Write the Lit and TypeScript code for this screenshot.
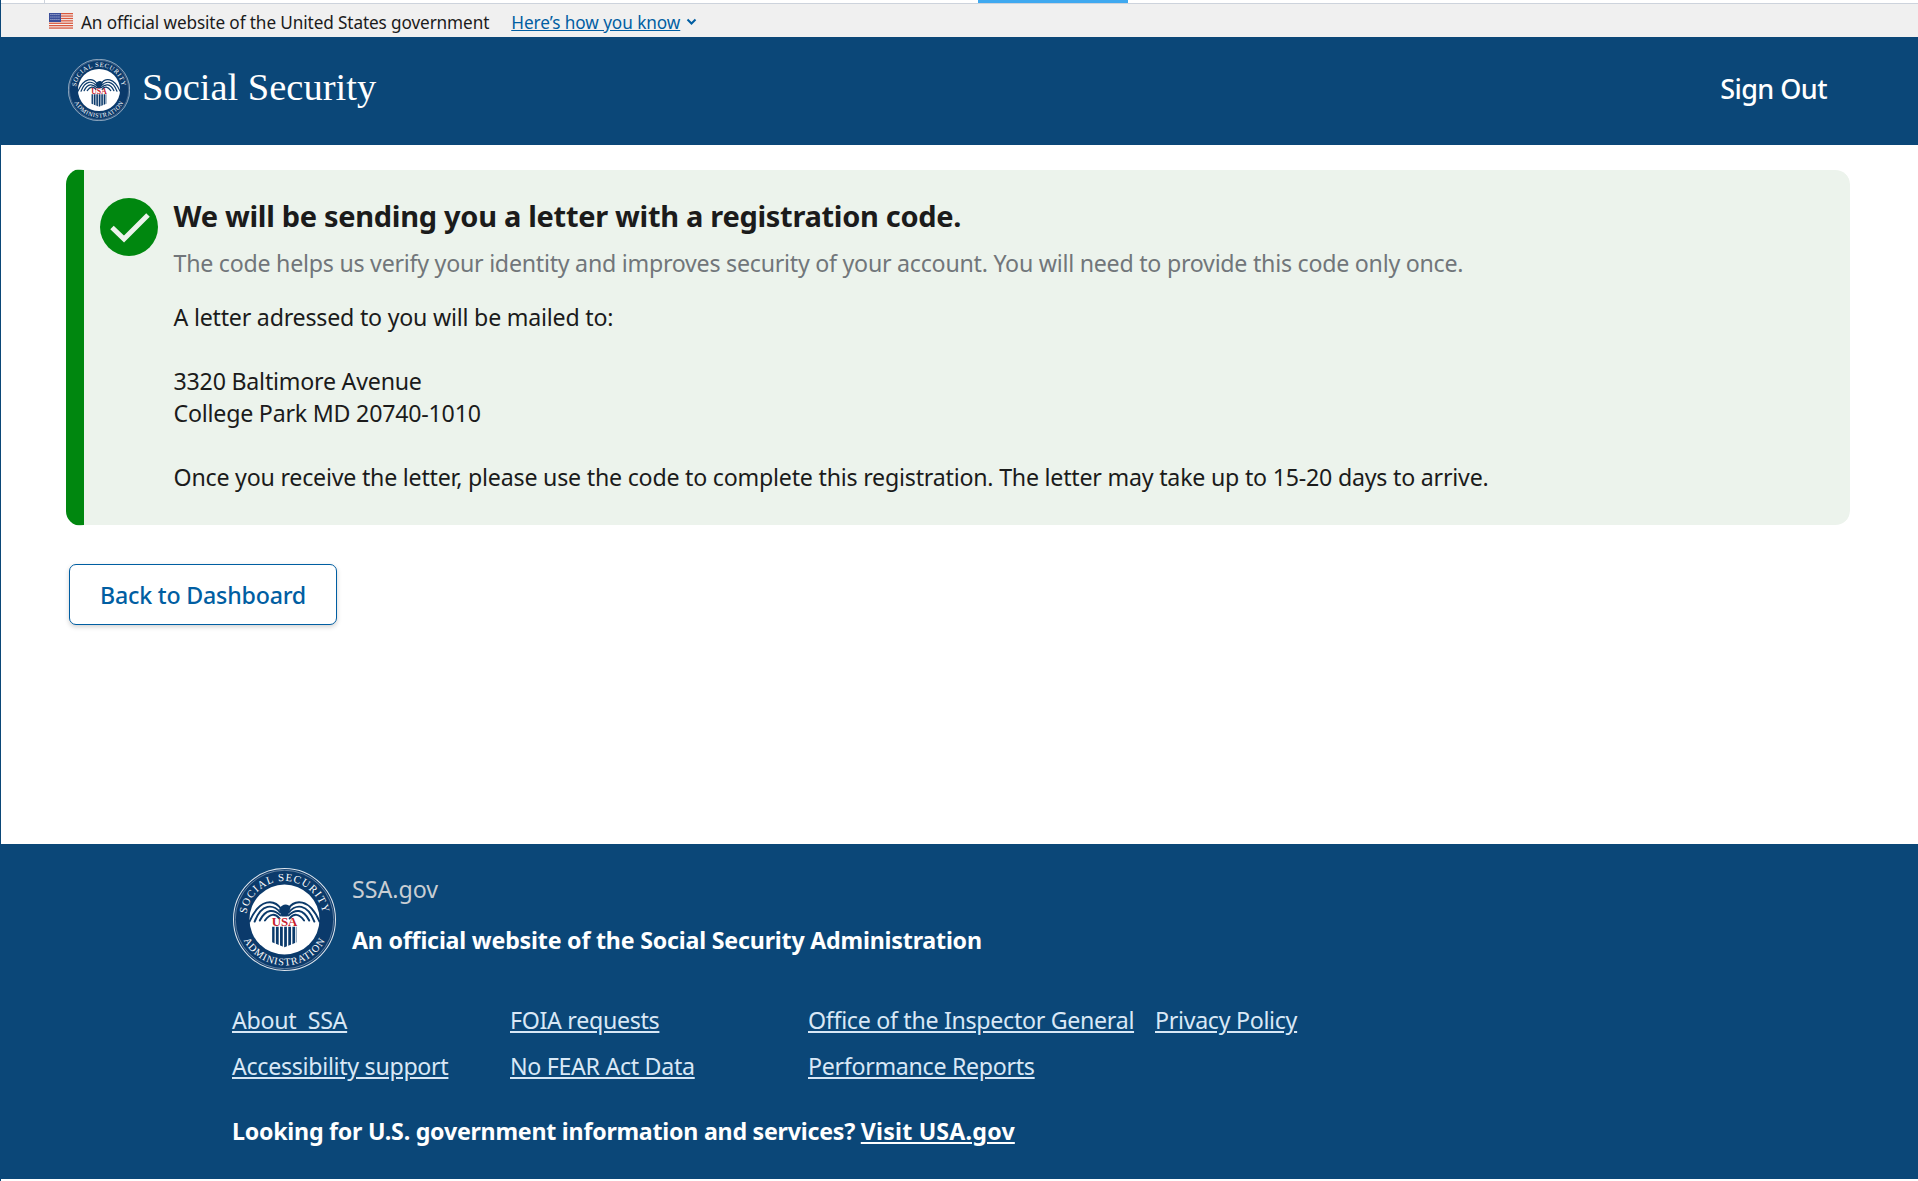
import { LitElement, html, css, svg } from "lit";
import { customElement, property } from "lit/decorators.js";

@customElement("ssa-seal")
class SsaSeal extends LitElement {
  @property({ type: Number }) size = 62;
  @property({ type: String }) uid = "a";
  static styles = css`
    :host { display: block; line-height: 0; }
    text { font-family: "Liberation Serif", serif; fill: #fff; }
  `;
  render() {
    const wing = (m: number) => svg`<g transform="translate(50 0) scale(${m} 1)" fill="none" stroke="#0b3a6b" stroke-width="1.900" stroke-linecap="round">
      <path d="M3 40 C10 30 24 29 34 52"/>
      <path d="M4 43 C11 35 22 34 29 52"/>
      <path d="M4 46 C10 40 18 39 24 51"/>
      <path d="M5 49 C9 44 14 44 19 51"/>
    </g>`;
    return html`<svg width=${this.size} height=${this.size} viewBox="0 0 100 100">
      <circle cx="50" cy="50" r="49.500" fill="#0b3a6b" stroke="#dfe6ee" stroke-width="1"/>
      <circle cx="50" cy="50" r="47.800" fill="none" stroke="#dfe6ee" stroke-width=".4"/>
      <circle cx="50" cy="50" r="34" fill="#fff"/>
      <defs>
        <path id="t${this.uid}" d="M 14.800 63 A 37.500 37.500 0 1 1 85.200 63"/>
        <path id="b${this.uid}" d="M 5.500 50 A 44.500 44.500 0 0 0 94.500 50"/>
      </defs>
      <text font-size="10.500" letter-spacing="1"><textPath href="#t${this.uid}" startOffset="50%" text-anchor="middle">SOCIAL SECURITY</textPath></text>
      <text font-size="10" letter-spacing=".9"><textPath href="#b${this.uid}" startOffset="50%" text-anchor="middle">ADMINISTRATION</textPath></text>
      ${wing(1)}${wing(-1)}
      <path d="M45 40 C47 35 53 34 56 38 L53 47 L47 47 Z" fill="#0b3a6b"/>
      <path d="M38 57 H62 V72 L50 77 L38 72 Z" fill="#0b3a6b"/>
      <path d="M41 56 V76 M45 56 V77 M49 56 V78 M53 56 V78 M57 56 V77 M61 56 V76" stroke="#fff" stroke-width="1.300"/>
      <text x="50" y="56" text-anchor="middle" font-size="12.500" font-weight="700" style="fill:#c8202e">USA</text>
    </svg>`;
  }
}

@customElement("app-root")
class AppRoot extends LitElement {
  static styles = css`
    :host { display: block; font-family: "Noto Sans", "Open Sans", sans-serif; color: #1b1b1b; background: #fff; }
    .page { height: 1181px; display: flex; flex-direction: column; box-sizing: border-box; border-left: 1px solid #0b4778; position: relative; overflow: hidden; }
    .tabline { height: 4px; background: #fff; border-bottom: 1px solid #cdd3dc; box-sizing: border-box; flex: none; }
    .tabmark { position: absolute; left: 977px; top: 0; width: 150px; height: 3px; background: #3fa9f0; }
    .tabsep { position: absolute; left: 43px; top: 0; width: 1px; height: 3px; background: #cdd3dc; }
    .banner { height: 33px; flex: none; box-sizing: border-box; background: #f0f0f0; display: flex; align-items: center; padding: 3px 0 0 48px; font-size: 17.2px; letter-spacing: -0.12px; }
    .flag { width: 24px; height: 17px; margin: -1px 8px 0 0; flex: none; display: block; }
    .how { color: #005ea2; text-decoration: underline; margin-left: 22px; letter-spacing: -0.06px; }
    .chev { margin-left: 6px; display: block; }
    .head { height: 108px; flex: none; background: #0b4778; display: flex; align-items: center; justify-content: space-between; padding: 0 91px 0 67px; }
    .brand { display: flex; align-items: center; gap: 12px; }
    .brand-seal { margin-top: -2px; }
    .brand-name { font-family: "Liberation Serif", serif; font-size: 38.5px; color: #fff; position: relative; top: -4px; }
    .signout { color: #fff; font-size: 27px; font-weight: 500; letter-spacing: -0.55px; position: relative; top: -3px; }
    main { flex: 1; padding: 24px 68px 0 65px; }
    .alert { height: 357px; box-sizing: border-box; background: #ecf3ec; background-clip: padding-box; border-left: 18px solid #00870f; border-top: 1px solid transparent; border-bottom: 1px solid transparent; border-radius: 15px; display: flex; padding: 28px 20px 0 16px; gap: 15.5px; }
    .check { width: 58px; height: 58px; flex: none; display: block; }
    h1 { margin: 0; font-size: 29px; font-weight: 700; line-height: 40px; letter-spacing: -0.3px; position: relative; top: -2px; }
    .sub { color: #71767a; font-size: 23.2px; line-height: 32px; margin-top: 9px; letter-spacing: -0.25px; }
    .txt { font-size: 23.2px; line-height: 32px; letter-spacing: -0.22px; }
    .t1 { margin-top: 22px; } .t2 { margin-top: 32px; } .t3 { margin-top: 32px; }
    .btn { display: inline-flex; align-items: center; justify-content: center; box-sizing: border-box; margin: 38px 0 0 3px; width: 268px; height: 61px; background: #fff; border: 1.5px solid #005ea2; border-radius: 7px; color: #005ea2; font-size: 23.2px; font-weight: 500; letter-spacing: -0.2px; box-shadow: 0 2px 5px rgba(0,0,0,.18); }
    footer { flex: none; height: 335px; margin-bottom: 2px; background: #0b4778; color: #fff; padding: 24px 0 0 231px; box-sizing: border-box; }
    .f-top { display: flex; align-items: flex-start; gap: 16px; margin-left: 1px; }
    .gov { color: #c9ced3; font-size: 23.2px; line-height: 32px; margin-top: 5px; }
    .off { font-size: 23.2px; font-weight: 700; line-height: 32px; margin-top: 19px; letter-spacing: -0.2px; }
    .links { display: grid; grid-template-columns: 278px 298px 347px auto; row-gap: 14px; margin-top: 33px; justify-content: start; font-size: 23.2px; line-height: 32px; letter-spacing: -0.3px; }
    .links a { color: #d9e8f6; text-decoration: underline; white-space: nowrap; justify-self: start; }
    .look { font-size: 23.2px; font-weight: 700; margin-top: 33px; line-height: 32px; letter-spacing: -0.24px; }
    .look a { color: #fff; text-decoration: underline; letter-spacing: 0.2px; }
  `;
  render() {
    const links = ["About\u00a0\u00a0SSA", "FOIA requests", "Office of the Inspector General", "Privacy Policy", "Accessibility support", "No FEAR Act Data", "Performance Reports"];
    return html`<div class="page">
      <div class="tabline"></div><div class="tabmark"></div><div class="tabsep"></div>
      <div class="banner">
        <svg class="flag" viewBox="0 0 24 17"><rect width="24" height="17" fill="#f4f4f4"/>
          ${[0,2.400,4.800,7.200,9.600,12,14.400].map(y => svg`<rect y=${y} width="24" height="1.300" fill="#d9583e"/>`)}
          <rect width="12" height="9" fill="#3c4f9a"/>
          ${[1.500,4,6.500].map(y => svg`<path d="M1.500 ${y}h9" stroke="#dfe4f2" stroke-width=".9" stroke-dasharray=".9 1.100"/>`)}
        </svg>
        <span>An official website of the United States government</span>
        <span class="how">Here’s how you know</span>
        <svg class="chev" width="11" height="8" viewBox="0 0 11 8"><path d="M1.500 1.500 5.500 5.500 9.500 1.500" fill="none" stroke="#005ea2" stroke-width="2"/></svg>
      </div>
      <div class="head">
        <div class="brand"><ssa-seal class="brand-seal" size="62" uid="h"></ssa-seal><span class="brand-name">Social Security</span></div>
        <div class="signout">Sign Out</div>
      </div>
      <main>
        <div class="alert">
          <svg class="check" viewBox="0 0 58 58"><circle cx="29" cy="29" r="29" fill="#00870f"/><path d="M12 29.500 24 41 48 17" fill="none" stroke="#ecf3ec" stroke-width="5"/></svg>
          <div>
            <h1>We will be sending you a letter with a registration code.</h1>
            <div class="sub">The code helps us verify your identity and improves security of your account. You will need to provide this code only once.</div>
            <div class="txt t1">A letter adressed to you will be mailed to:</div>
            <div class="txt t2">3320 Baltimore Avenue<br>College Park MD 20740-1010</div>
            <div class="txt t3">Once you receive the letter, please use the code to complete this registration. The letter may take up to 15-20 days to arrive.</div>
          </div>
        </div>
        <div class="btn">Back to Dashboard</div>
      </main>
      <footer>
        <div class="f-top"><ssa-seal size="103" uid="f"></ssa-seal><div><div class="gov">SSA.gov</div><div class="off">An official website of the Social Security Administration</div></div></div>
        <div class="links">${links.map(l => html`<a>${l}</a>`)}</div>
        <div class="look">Looking for U.S. government information and services? <a>Visit USA.gov</a></div>
      </footer>
    </div>`;
  }
}
